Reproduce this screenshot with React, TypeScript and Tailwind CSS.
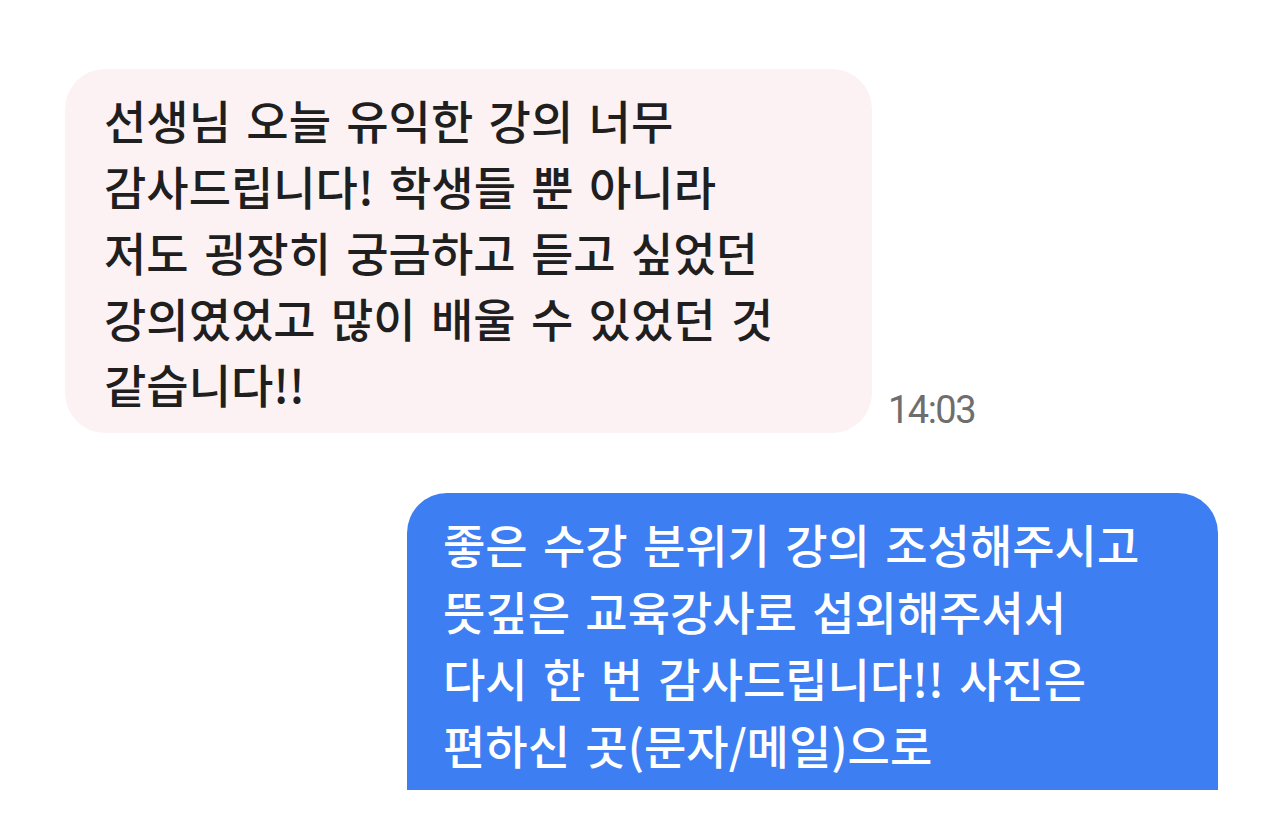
import React from "react";

const received = [
  "선생님 오늘 유익한 강의 너무",
  "감사드립니다! 학생들 뿐 아니라",
  "저도 굉장히 궁금하고 듣고 싶었던",
  "강의였었고 많이 배울 수 있었던 것",
  "같습니다!!",
];

const sent = [
  "좋은 수강 분위기 강의 조성해주시고",
  "뜻깊은 교육강사로 섭외해주셔서",
  "다시 한 번 감사드립니다!! 사진은",
  "편하신 곳(문자/메일)으로",
];

export default function App() {
  return (
    <div
      className="w-[1280px] h-[828px] bg-white"
      style={{ fontFamily: '"Noto Sans CJK KR", "Noto Sans", sans-serif' }}
    >
      <div className="h-[790px] overflow-hidden flex flex-col pt-[69px]">
        {/* received message */}
        <div className="flex items-end pl-[65px]">
          <div className="w-[807px] h-[364px] rounded-[40px] bg-[#fcf2f4] pl-[39px] pt-[17px] text-[46px] leading-[66px] [word-spacing:5px] font-medium text-[#1f1f1f]">
            {received.map((line) => (
              <div key={line}>{line}</div>
            ))}
          </div>
          <span
            className="ml-[16px] mb-[4px] text-[38px] leading-none tracking-[-0.04em] text-[#6e6e6e]"
            style={{ fontFamily: "Roboto, sans-serif" }}
          >
            14:03
          </span>
        </div>

        {/* sent message */}
        <div className="flex justify-end pr-[62px] mt-[60px]">
          <div className="w-[811px] h-[420px] rounded-[40px] bg-[#3d7ef2] pl-[36px] pt-[17px] text-[46px] leading-[67px] [word-spacing:5px] font-medium text-white">
            {sent.map((line) => (
              <div key={line}>{line}</div>
            ))}
          </div>
        </div>
      </div>
    </div>
  );
}
